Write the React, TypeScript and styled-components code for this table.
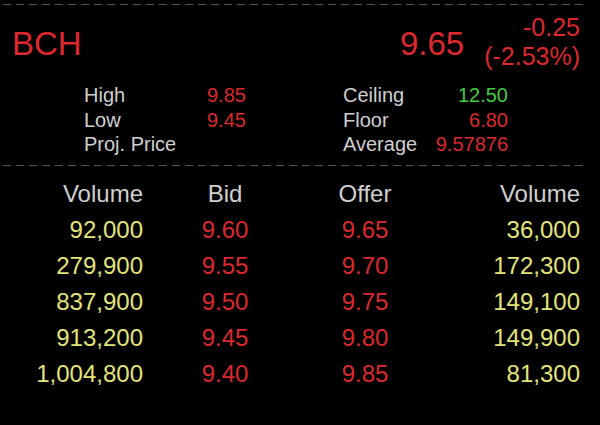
import { Fragment } from 'react'
import styled, { createGlobalStyle } from 'styled-components'

const colors = {
  bg: '#000000',
  red: '#dc282e',
  yellow: '#e2e47a',
  green: '#3fcc3f',
  label: '#cfcfcf',
  dash: '#555555',
}

const GlobalStyle = createGlobalStyle`
  html, body {
    margin: 0;
    padding: 0;
    background: ${colors.bg};
  }
  body {
    font-family: "Liberation Sans", Arial, sans-serif;
  }
`

const Screen = styled.div`
  width: 600px;
  height: 425px;
  background: ${colors.bg};
  padding-top: 4px;
  box-sizing: border-box;
  overflow: hidden;
`

const Dashed = styled.div<{ gap?: number }>`
  height: 1px;
  margin: ${p => p.gap ?? 0}px 12px 0 3px;
  background-image: repeating-linear-gradient(
    to right,
    ${colors.dash} 0,
    ${colors.dash} 8px,
    transparent 8px,
    transparent 13px
  );
`

const Header = styled.div`
  display: flex;
  justify-content: space-between;
  align-items: flex-start;
  padding: 8px 20px 0 12px;
`

const Symbol = styled.div`
  margin-top: 14px;
  font-size: 33px;
  line-height: 33px;
  color: ${colors.red};
`

const PriceBlock = styled.div`
  display: flex;
  align-items: flex-start;
  gap: 20px;
`

const LastPrice = styled.div`
  margin-top: 14px;
  font-size: 33px;
  line-height: 33px;
  color: ${colors.red};
`

const Change = styled.div`
  display: flex;
  flex-direction: column;
  align-items: flex-end;
  font-size: 25px;
  line-height: 29px;
  color: ${colors.red};
`

const Stats = styled.div`
  display: flex;
  padding: 12px 0 0 84px;
  gap: 95px;
  height: 74px;
`

const StatGroup = styled.div<{ labelWidth: number; valueWidth: number; valueAlign: 'left' | 'right' }>`
  display: grid;
  grid-template-columns: ${p => p.labelWidth}px ${p => p.valueWidth}px;
  grid-auto-rows: 24.5px;
  font-size: 20px;
  line-height: 24.5px;

  & > span:nth-child(2n) {
    text-align: ${p => p.valueAlign};
  }
`

const Label = styled.span`
  color: ${colors.label};
  white-space: nowrap;
`

const Value = styled.span<{ tone: 'red' | 'green' }>`
  color: ${p => (p.tone === 'green' ? colors.green : colors.red)};
`

const Book = styled.div`
  display: grid;
  grid-template-columns: 143px 164px 116px 157px;
  grid-auto-rows: 36px;
  padding-top: 10px;
  font-size: 24px;
  line-height: 36px;
`

const Cell = styled.div<{ align: 'right' | 'center'; tone: 'head' | 'red' | 'yellow' }>`
  text-align: ${p => p.align};
  color: ${p =>
    p.tone === 'head' ? colors.label : p.tone === 'red' ? colors.red : colors.yellow};
  white-space: nowrap;
`

const book = [
  { bidVol: '92,000', bid: '9.60', offer: '9.65', offerVol: '36,000' },
  { bidVol: '279,900', bid: '9.55', offer: '9.70', offerVol: '172,300' },
  { bidVol: '837,900', bid: '9.50', offer: '9.75', offerVol: '149,100' },
  { bidVol: '913,200', bid: '9.45', offer: '9.80', offerVol: '149,900' },
  { bidVol: '1,004,800', bid: '9.40', offer: '9.85', offerVol: '81,300' },
]

export default function App() {
  return (
    <>
      <GlobalStyle />
      <Screen>
        <Dashed />
        <Header>
          <Symbol>BCH</Symbol>
          <PriceBlock>
            <LastPrice>9.65</LastPrice>
            <Change>
              <span>-0.25</span>
              <span>(-2.53%)</span>
            </Change>
          </PriceBlock>
        </Header>

        <Stats>
          <StatGroup labelWidth={123} valueWidth={41} valueAlign="left">
            <Label>High</Label>
            <Value tone="red">9.85</Value>
            <Label>Low</Label>
            <Value tone="red">9.45</Value>
            <Label>Proj. Price</Label>
            <span />
          </StatGroup>
          <StatGroup labelWidth={89} valueWidth={76} valueAlign="right">
            <Label>Ceiling</Label>
            <Value tone="green">12.50</Value>
            <Label>Floor</Label>
            <Value tone="red">6.80</Value>
            <Label>Average</Label>
            <Value tone="red">9.57876</Value>
          </StatGroup>
        </Stats>

        <Dashed gap={8} />

        <Book>
          <Cell align="right" tone="head">Volume</Cell>
          <Cell align="center" tone="head">Bid</Cell>
          <Cell align="center" tone="head">Offer</Cell>
          <Cell align="right" tone="head">Volume</Cell>
          {book.map((row, i) => (
            <Fragment key={i}>
              <Cell align="right" tone="yellow">{row.bidVol}</Cell>
              <Cell align="center" tone="red">{row.bid}</Cell>
              <Cell align="center" tone="red">{row.offer}</Cell>
              <Cell align="right" tone="yellow">{row.offerVol}</Cell>
            </Fragment>
          ))}
        </Book>
      </Screen>
    </>
  )
}
